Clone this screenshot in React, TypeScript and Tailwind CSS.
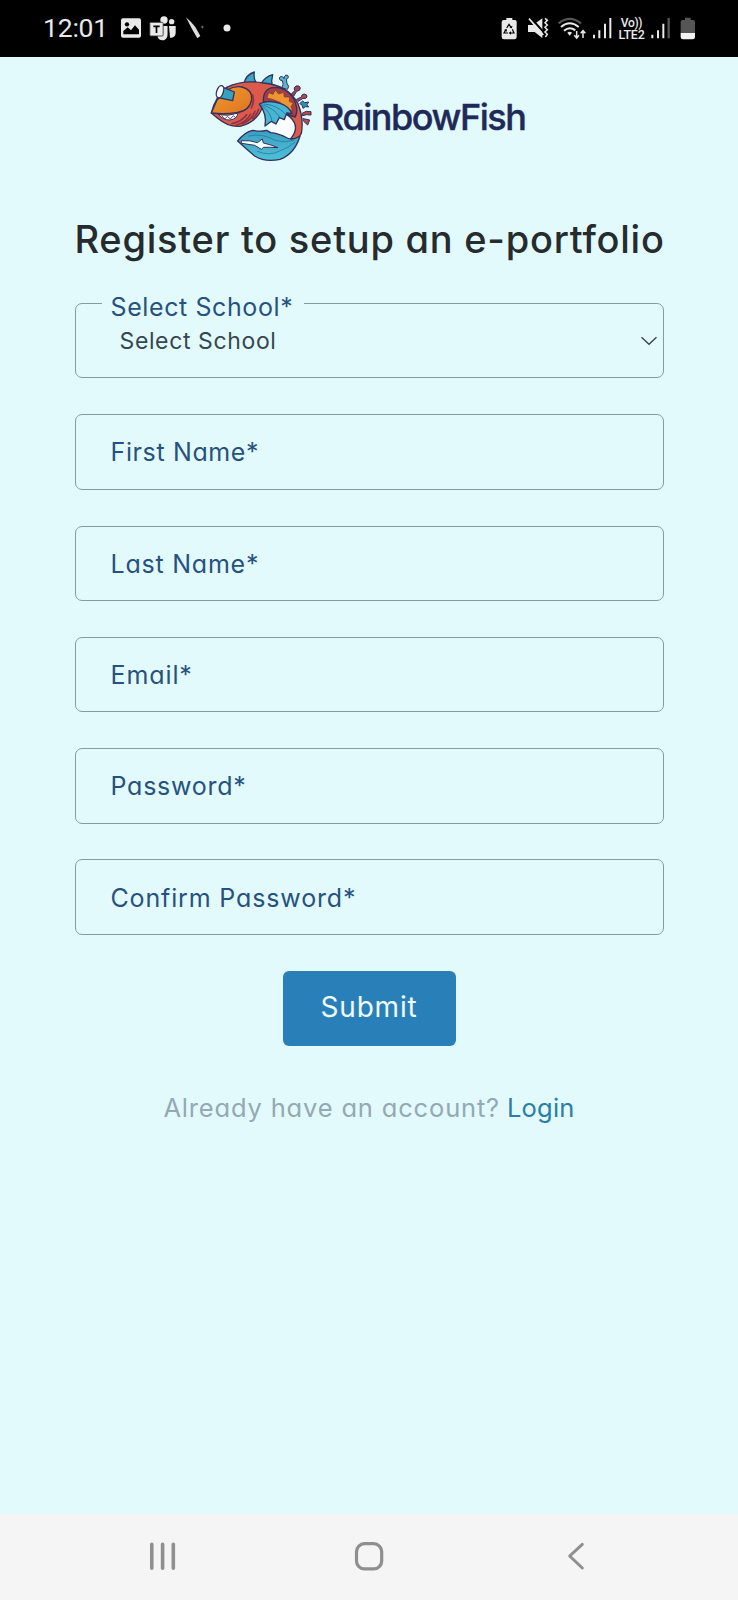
import React from "react";

function StatusBar() {
  return (
    <header className="flex h-[56.5px] items-start bg-black pt-[13px] pr-10 pl-[43px] text-[#e9e9e9]">
      <span className="w-[75px] font-['Roboto',sans-serif] text-[26.5px] leading-[30px] tracking-[-0.2px] whitespace-nowrap">
        12:01
      </span>
      <svg className="h-[30px] w-[27px]" viewBox="264 39 81 90">
        <rect x="273" y="55" width="60" height="58" rx="6" fill="#e9e9e9" />
        <path d="M280 103V93l13-11 10 9 12-15 12 13v14z" fill="#000" />
        <circle cx="291" cy="73" r="6.5" fill="#000" />
      </svg>
      <svg className="h-[30px] w-9" viewBox="345 39 108 90">
        <circle cx="402" cy="60" r="11" fill="#e9e9e9" />
        <circle cx="425" cy="65" r="8" fill="#e9e9e9" />
        <path d="M417 78h20v20c0 9-6 15-17 15z" fill="#e9e9e9" />
        <path d="M383 78h30v24c0 11-6 19-15 19-8 0-13-4-15-10z" fill="#e9e9e9" />
        <path d="M415 77v32" stroke="#000" strokeWidth="3" />
        <rect x="359.500" y="67" width="40" height="41" rx="3" fill="#e9e9e9" stroke="#333" strokeWidth="2.500" />
        <path d="M370 79h19M379.500 79v20" stroke="#000" strokeWidth="5" />
      </svg>
      <svg className="h-[30px] w-[27px]" viewBox="453 39 81 90">
        <path d="M468 52q16 14 28 29l15 27-9 7-16-28z" fill="#dedede" />
        <path d="M517 77v8M513 81h8" stroke="#999" strokeWidth="2" />
      </svg>
      <svg className="h-[30px] w-[30px]" viewBox="534 39 90 90">
        <circle cx="591" cy="84" r="10.500" fill="#e9e9e9" />
      </svg>

      <svg className="ml-auto h-[30px] w-[25px]" viewBox="30 39 75 90">
        <path d="M49 54h18v6h8q5 0 5 6v45q0 7-7 7H42q-7 0-7-7V66q0-6 6-6h8z" fill="#e9e9e9" />
        <path d="M50 84l7-11 6 9M67 88l5 11H61M54 99H42l6-10" fill="none" stroke="#000" strokeWidth="3.500" />
        <path d="M58 83l8 2 1-8zM63 94v10l-7-5zM42 90l8-3 1 8z" fill="#000" />
      </svg>
      <svg className="h-[30px] w-[30px]" viewBox="105 39 90 90">
        <path d="M114 75h15l28-20v59l-23-18h-20z" fill="#e9e9e9" />
        <path d="M120 51l42 47" stroke="#000" strokeWidth="6" />
        <path d="M117 56l43 49" stroke="#e9e9e9" strokeWidth="5" />
        <path d="M165 55l7 6-7 7 7 7-7 7 7 7-7 7 7 7-6 8" fill="none" stroke="#e9e9e9" strokeWidth="4.500" />
      </svg>
      <svg className="h-[30px] w-[35px]" viewBox="195 39 105 90">
        <path d="M206 70q33-27 67 0" fill="none" stroke="#555" strokeWidth="7" />
        <path d="M213 81q26-22 53 0M222 92q17-14 34-1" fill="none" stroke="#e9e9e9" strokeWidth="6" />
        <path d="M232 98q7-6 14 0l-7 9z" fill="#e9e9e9" />
        <path d="M260 93v20M253 106l7 8 7-8M279 114V92M272 100l7-8 7 8" fill="none" stroke="#e9e9e9" strokeWidth="4.500" />
      </svg>
      <svg className="h-[30px] w-[25px]" viewBox="300 39 75 90">
        <path d="M312 104v11M328 91v24M345 71v44M361 54v61" stroke="#e9e9e9" strokeWidth="6" />
      </svg>
      <div className="flex w-[33px] flex-col items-center pt-[4px] font-['Roboto',sans-serif] text-[12px] leading-[12px] font-medium">
        <span className="tracking-[-0.3px]">Vo))</span>
        <span className="text-[12.5px] tracking-[-0.2px]">LTE2</span>
      </div>
      <svg className="h-[30px] w-[30px]" viewBox="474 39 90 90">
        <path d="M487 104v11M504 91v24M520 71v44" stroke="#e9e9e9" strokeWidth="6" />
        <path d="M536 54v61" stroke="#555" strokeWidth="7" />
      </svg>
      <svg className="h-[30px] w-5" viewBox="564 39 60 90">
        <path d="M585 53h17v7h7q6 0 6 6v34h-43V66q0-6 6-6h7z" fill="#555" />
        <path d="M572 99h43v12q0 7-7 7h-29q-7 0-7-7z" fill="#f2f2f2" />
      </svg>
    </header>
  );
}

function FishMark() {
  return (
    <svg className="h-[106px] w-[120px]" viewBox="0 0 360 318" strokeLinejoin="round" strokeLinecap="round">
      <defs>
        <linearGradient id="head" x1="0" y1="0" x2="1" y2="1">
          <stop offset="0" stopColor="#f09a2c" />
          <stop offset="1" stopColor="#df7422" />
        </linearGradient>
        <linearGradient id="tail" x1="0" y1="0" x2="0" y2="1">
          <stop offset="0" stopColor="#3c9fc2" />
          <stop offset="1" stopColor="#4fc0d8" />
        </linearGradient>
      </defs>
      <path d="M242 158Q292 172 292 225L262 234Q214 216 204 190Z" fill="#fbfeff" />
      <g stroke="#33315e" strokeWidth="4">
        <path d="M132 64q6-26 31-34-3 18 5 32z" fill="#36a6c4" />
        <path d="M184 64q12-20 34-26-5 18-1 36z" fill="#36a6c4" />
        <path d="M246 76q7-10 1-20-9 0-9-8 2-6 8-4 5 1 6 6 0-9 6-11 8 0 7 7-1 5-6 5 0 14 7 22l-3 8z" fill="#58b6cf" strokeWidth="3" />
        <path d="M274 96l10-10q-5-10 4-14 11-3 13 6 0 9-11 10l-8 13z" fill="#9c4655" strokeWidth="3" />
        <path d="M290 112l14-7q0-8 9-9 9 1 8 9-3 7-12 4l-14 9z" fill="#ad4a53" strokeWidth="3" />
        <path d="M300 124l8-7 6 5 12-2-5 8 5 7-10-1-7 5-2-8z" fill="#2e92b8" strokeWidth="3" />
        <path d="M308 153l11-5 14 1v10l-14-1-10 3zM310 170l19 4-6 15-12-11z" fill="#b84b49" strokeWidth="3" />
        <path
          d="M34 153Q45 106 80 76Q130 52 190 63Q262 68 294 125Q312 170 304 214L290 235Q275 228 272 230Q302 195 270 165Q245 142 200 140L190 128Q175 180 120 193Q85 196 52 168Z"
          fill="#dd5a4b"
        />
        <path d="M56 158q30 6 58-5-2 18-24 21-20 1-34-16z" fill="#fff" strokeWidth="3" />
        <path d="M34 153L50 116Q84 68 126 75Q158 84 155 112Q150 146 110 152Q72 158 34 153Z" fill="url(#head)" />
        <path d="M190 118q-1-38 31-42 37 0 57 29 20 34 8 60l-30-9q-18-30-66-38z" fill="#a33f45" />
        <path d="M201 108l5-16 13 5 7-13 10 12 15-5 2 14 16 0-1 13 12 6-7 9 5 14-14-5-12-12-14-10-21-8z" fill="#ee9430" strokeWidth="2" stroke="#7b2f3c" />
        <path d="M178 126q24-14 62-2 26 8 36 31l-16-2-7 20-15-6-10 19-14-8-19 14q7-34-17-66z" fill="#49b5d3" />
        <path d="M184 128q38 9 56 38M184 130q28 20 32 46M192 126q38 2 62 28" fill="none" strokeWidth="3" stroke="#287fa2" />
        <path d="M113 237Q134 210 158 205Q182 210 200 205L212 212Q236 214 262 228Q278 236 300 222Q284 276 240 292Q196 302 164 282Q140 262 113 237Z" fill="url(#tail)" />
        <path d="M125 236q26-2 47 6l15-11 3 12q24 5 44 14-27-2-43-1l-7 6-20-12-39-6z" fill="#f2feff" strokeWidth="3" />
        <path d="M146 222q40-10 82 14 28 7 52-1M172 268q37 16 69-2 26-9 43-25" fill="none" strokeWidth="2.500" stroke="#247e9e" />
        <path d="M64 74l39 16-5 26-44-9z" fill="#35a3be" />
        <ellipse cx="60" cy="89" rx="10" ry="19" transform="rotate(18 60 89)" fill="#f4fdff" />
      </g>
      <g fill="none" stroke="#8a3344" strokeWidth="5">
        <path d="M140 158q-14 20-44 27M152 156q-12 24-44 34M165 148q-10 27-38 37M176 142q-6 18-18 28M157 98q8 18-3 40" />
      </g>
      <path d="M66 162l8 9 8-8 9 8 9-10 6 5" fill="none" stroke="#33315e" strokeWidth="2.500" />
    </svg>
  );
}

const fieldText =
  "text-[25px] leading-[30px] whitespace-nowrap text-[#26527f]";

const fields = [
  { label: "First Name*", tracking: "tracking-[0.63px]" },
  { label: "Last Name*", tracking: "tracking-[0.77px]" },
  { label: "Email*", tracking: "tracking-[0.9px]" },
  { label: "Password*", tracking: "tracking-[0.75px]" },
  { label: "Confirm Password*", tracking: "tracking-[0.85px]" },
];

function SchoolSelect() {
  return (
    <div className="relative flex h-[75.4px] items-center justify-between rounded-[7px] border-[1.5px] border-[#879aa1] pr-[5px] pl-11">
      <span
        className={`absolute -top-[12.5px] left-[26px] w-[202px] bg-[#e3fafd] pl-[9px] tracking-[0.6px] ${fieldText}`}
      >
        Select School*
      </span>
      <span className="text-[23px] leading-[30px] tracking-[0.62px] text-[#37474f]">Select School</span>
      <svg className="h-[10px] w-[18px]" viewBox="0 0 18 10" fill="none" stroke="#37474f" strokeWidth="1.4">
        <path d="M1.500 1.200l7.500 7 7.500-7" />
      </svg>
    </div>
  );
}

function NavigationBar() {
  return (
    <nav className="mt-auto flex h-[86px] items-start bg-[#f5f5f5] pt-[26px] pl-[148px]">
      <svg className="h-8 w-[30px]" viewBox="0 0 30 32" stroke="#8f8f8f" strokeWidth="3.600" strokeLinecap="round">
        <path d="M3.800 4.300v24M14.600 4.300v24M25.300 4.300v24" />
      </svg>
      <svg className="ml-[175px] h-8 w-8" viewBox="0 0 32 32" fill="none" stroke="#8f8f8f" strokeWidth="3.200">
        <rect x="3.500" y="3.700" width="25.200" height="25.200" rx="8" />
      </svg>
      <svg className="ml-[180px] h-8 w-6" viewBox="0 0 24 32" fill="none" stroke="#8f8f8f" strokeWidth="3" strokeLinecap="round" strokeLinejoin="round">
        <path d="M17.300 4.300L4.700 16l12.600 12" />
      </svg>
    </nav>
  );
}

export default function App() {
  return (
    <div className="flex h-[1600px] w-[738px] flex-col overflow-hidden bg-[#e3fafd] font-['Inter',sans-serif] [font-feature-settings:'cv11']">
      <StatusBar />
      <main className="flex flex-col px-[74.5px]">
        <div className="mt-[5.5px] ml-[125.5px] flex h-[106px] items-center">
          <FishMark />
          <span className="mt-[4px] ml-px text-[36px] leading-10 font-medium tracking-[-1.45px] text-[#202a59] [-webkit-text-stroke:0.4px_#202a59]">
            RainbowFish
          </span>
        </div>
        <h1 className="mt-[49px] text-center text-[38px] leading-[44px] font-medium tracking-[0.75px] whitespace-nowrap text-[#262b2d]">
          Register to setup an e-portfolio
        </h1>
        <form className="mt-[42px] flex flex-col gap-[35.9px]">
          <SchoolSelect />
          {fields.map((f) => (
            <label
              key={f.label}
              className={`flex h-[75.4px] items-center rounded-[7px] border-[1.5px] border-[#879aa1] pt-px pl-[35px] ${fieldText} ${f.tracking}`}
            >
              {f.label}
            </label>
          ))}
          <button
            type="button"
            className="h-[75px] w-[173px] self-center rounded-md bg-[#297fb8] pb-[2px] text-[28px] leading-8 tracking-[0.8px] text-[#f0fbff]"
          >
            Submit
          </button>
        </form>
        <p className="mt-[46px] flex justify-center gap-[7px] text-[25.5px] leading-[32px] whitespace-nowrap text-[#93a9b3]">
          <span className="tracking-[0.83px]">Already have an account?</span>
          <a className="tracking-[0.2px] text-[#297fa8]">Login</a>
        </p>
      </main>
      <NavigationBar />
    </div>
  );
}
